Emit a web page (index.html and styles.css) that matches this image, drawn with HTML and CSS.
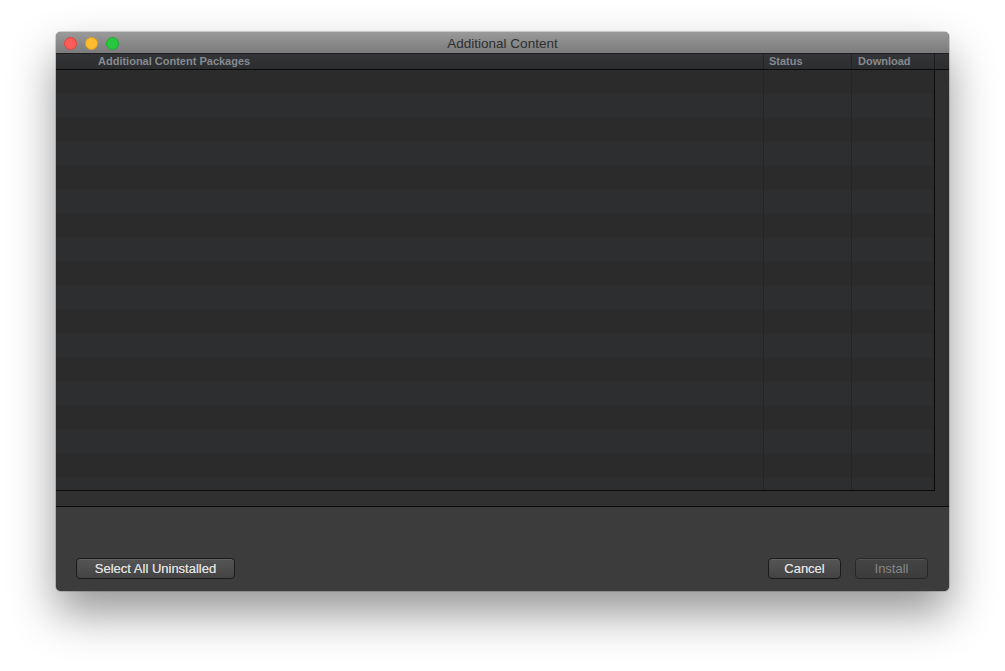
FILE: index.html
```html
<!DOCTYPE html>
<html>
<head>
<meta charset="utf-8">
<title>Additional Content</title>
<link rel="stylesheet" href="styles.css">
</head>
<body>
<div class="window">
  <div class="titlebar">
    <div class="lights">
      <span class="light red"></span>
      <span class="light yellow"></span>
      <span class="light green"></span>
    </div>
    <div class="title">Additional Content</div>
  </div>
  <div class="header">
    <div class="hcol hname">Additional Content Packages</div>
    <div class="hcol hstatus">Status</div>
    <div class="hcol hdownload">Download</div>
    <div class="hcol hfill"></div>
  </div>
  <div class="scrollarea">
    <div class="table">
      <div class="bcol bname"></div>
      <div class="bcol bstatus"></div>
      <div class="bcol bdownload"></div>
    </div>
  </div>
  <div class="footer">
    <button class="btn btn-select">Select All Uninstalled</button>
    <div class="right-buttons">
      <button class="btn btn-cancel">Cancel</button>
      <button class="btn btn-install" disabled>Install</button>
    </div>
  </div>
</div>
</body>
</html>
```

FILE: styles.css
```css
html, body {
  margin: 0;
  padding: 0;
  background: #ffffff;
}
body {
  padding: 32px 0 0 56px;
  min-height: 671px;
  box-sizing: border-box;
  font-family: "Liberation Sans", Arial, Helvetica, sans-serif;
}
.window {
  width: 893px;
  height: 559px;
  border-radius: 5px;
  overflow: hidden;
  display: flex;
  flex-direction: column;
  background: #303030;
  box-shadow: 0 22px 45px rgba(0,0,0,0.42), 0 0 0 1px rgba(0,0,0,0.16);
}
.titlebar {
  height: 21px;
  flex: 0 0 21px;
  border-bottom: 1px solid #1f1f1f;
  background: linear-gradient(#9a9a9a, #7b7b7b);
  position: relative;
  display: flex;
  align-items: center;
  justify-content: center;
}
.lights {
  position: absolute;
  left: 8px;
  top: 5px;
  display: flex;
  gap: 8px;
}
.light {
  width: 11px;
  height: 11px;
  border-radius: 50%;
  display: block;
}
.red { background: #fc5b57; border: 0.5px solid #e0443e; }
.yellow { background: #fdbc2e; border: 0.5px solid #dea123; }
.green { background: #27c840; border: 0.5px solid #1eab2f; }
.title {
  font-size: 13.5px;
  color: #2e2e2e;
  line-height: 21px;
  padding-top: 1px;
}
.header {
  height: 15px;
  flex: 0 0 15px;
  display: flex;
  background: linear-gradient(#333437, #2c2d2f);
  border-bottom: 1px solid #0a0a0a;
}
.hcol {
  font-size: 11px;
  font-weight: bold;
  color: #868a90;
  line-height: 15px;
  white-space: nowrap;
  box-sizing: border-box;
}
.hname { width: 707px; padding-left: 42px; }
.hstatus { width: 88px; border-left: 1px solid #222325; padding-left: 5px; }
.hdownload { width: 83px; border-left: 1px solid #222325; padding-left: 6px; }
.hfill { width: 15px; border-left: 1px solid #1c1c1e; }
.scrollarea {
  height: 436px;
  flex: 0 0 436px;
  background: #303030;
  border-bottom: 1px solid #0c0c0c;
}
.table {
  width: 879px;
  height: 421px;
  box-sizing: border-box;
  border-right: 1px solid #0a0a0a;
  border-bottom: 1px solid #0a0a0a;
  display: flex;
  background: repeating-linear-gradient(#2b2b2b 0px, #2b2b2b 24px, #2d2e30 24px, #2d2e30 48px);
}
.bcol { height: 100%; box-sizing: border-box; }
.bname { width: 707px; }
.bstatus { width: 88px; border-left: 1px solid #242426; }
.bdownload { width: 83px; border-left: 1px solid #242426; }
.footer {
  flex: 1;
  background: #3c3c3c;
  display: flex;
  align-items: flex-start;
  justify-content: space-between;
  padding: 51px 21px 0 20px;
}
.right-buttons {
  display: flex;
  gap: 14px;
}
.btn {
  height: 21px;
  box-sizing: border-box;
  border: 1px solid #1b1b1b;
  border-radius: 4px;
  background: linear-gradient(#555555, #434343);
  box-shadow: inset 0 1px 0 rgba(255,255,255,0.08);
  color: #dcdcdc;
  font-family: "Liberation Sans", Arial, Helvetica, sans-serif;
  font-size: 13px;
  line-height: 18px;
  padding: 0;
  text-shadow: 0 0 0.6px #dcdcdc;
}
.btn-select { width: 159px; }
.btn-cancel { width: 73px; }
.btn-install {
  width: 73px;
  color: #858585;
  background: linear-gradient(#444444, #3c3c3c);
  border-color: #272727;
  text-shadow: none;
}
```
